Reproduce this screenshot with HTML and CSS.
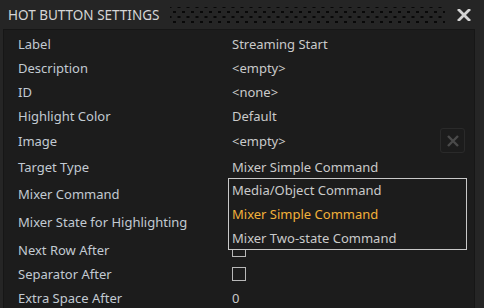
FILE: index.html
```html
<!DOCTYPE html>
<html>
<head>
<meta charset="utf-8">
<link rel="stylesheet" href="styles.css">
</head>
<body>
<div class="window">
  <div class="titlebar">
    <span class="title">HOT BUTTON SETTINGS</span>
    <span class="dots"></span>
    <span class="close"><svg width="14" height="12" viewBox="0 0 14 12"><path d="M2 1 L12 11 M12 1 L2 11" stroke="#d4d4d4" stroke-width="2.8" stroke-linecap="square"/></svg></span>
  </div>
  <div class="panel">
    <div class="rows">
      <div class="row h24"><span class="lbl">Label</span><span class="val">Streaming Start</span></div>
      <div class="row h24"><span class="lbl">Description</span><span class="val">&lt;empty&gt;</span></div>
      <div class="row h24"><span class="lbl">ID</span><span class="val">&lt;none&gt;</span></div>
      <div class="row h245"><span class="lbl">Highlight Color</span><span class="val">Default</span></div>
      <div class="row h25"><span class="lbl">Image</span><span class="val">&lt;empty&gt;</span><span class="clear"><svg width="14" height="14" viewBox="0 0 14 14"><path d="M2 2 L12 12 M12 2 L2 12" stroke="#4a4a4a" stroke-width="2.4"/></svg></span></div>
      <div class="row h265"><span class="lbl">Target Type</span><span class="val">Mixer Simple Command</span></div>
      <div class="row h28"><span class="lbl">Mixer Command</span><span class="val"></span></div>
      <div class="row h285"><span class="lbl">Mixer State for Highlighting</span><span class="val"></span></div>
      <div class="row h26"><span class="lbl">Next Row After</span><span class="val"><span class="check"></span></span></div>
      <div class="row h235"><span class="lbl">Separator After</span><span class="val"><span class="check"></span></span></div>
      <div class="row h24"><span class="lbl">Extra Space After</span><span class="val">0</span></div>
    </div>
    <div class="dropdown">
      <div class="item">Media/Object Command</div>
      <div class="item selected">Mixer Simple Command</div>
      <div class="item">Mixer Two-state Command</div>
    </div>
  </div>
</div>
</body>
</html>
```
FILE: styles.css
```css
html, body {
  margin: 0;
  padding: 0;
  background: #222222;
  overflow: hidden;
}
.window {
  width: 484px;
  height: 308px;
  background: #252525;
  font-family: "Noto Sans", "Open Sans", sans-serif;
  font-size: 13px;
  overflow: hidden;
  display: flex;
  flex-direction: column;
}
.titlebar {
  height: 29px;
  flex: none;
  display: flex;
  align-items: center;
  padding-left: 8px;
  padding-right: 13px;
  border-top-left-radius: 4px;
  box-sizing: border-box;
}
.title {
  color: #d6d6d6;
  font-size: 13.5px;
}
.dots {
  flex: 1;
  height: 16px;
  margin-left: 11px;
  margin-right: 12px;
  background-image:
    radial-gradient(circle, #080808 1.2px, transparent 1.5px),
    radial-gradient(circle, #080808 1.2px, transparent 1.5px);
  background-size: 9px 10px, 9px 10px;
  background-position: 0 0, 4.5px 5px;
}
.close {
  display: flex;
  align-items: center;
}
.panel {
  position: relative;
  flex: 1;
  margin-left: 3px;
  margin-right: 9px;
  background: #1c1c1c;
  border: 1px solid #161616;
  border-bottom: none;
  padding: 2px 0 0 14px;
}
.rows {
  display: flex;
  flex-direction: column;
}
.row {
  display: flex;
  align-items: center;
  flex: none;
}
.h24 { height: 24px; }
.h245 { height: 24.5px; }
.h25 { height: 25px; }
.h265 { height: 26.5px; }
.h28 { height: 28px; }
.h285 { height: 28.5px; }
.h26 { height: 26px; }
.h235 { height: 23.5px; }
.lbl {
  width: 214px;
  color: #c2cad2;
}
.val {
  color: #cacaca;
  flex: 1;
}
.clear {
  width: 25px;
  height: 25px;
  border: 1px solid #2a2a2a;
  border-radius: 3px;
  box-sizing: border-box;
  display: flex;
  align-items: center;
  justify-content: center;
  margin-right: 9px;
  margin-top: -1px;
}
.check {
  display: block;
  width: 14px;
  height: 14px;
  border: 1px solid #b8b8b8;
  box-sizing: border-box;
}
.dropdown {
  position: absolute;
  left: 224px;
  top: 148px;
  width: 239px;
  height: 72px;
  box-sizing: border-box;
  border: 1px solid #c8c8c8;
  background: #1c1c1c;
}
.item {
  height: 24px;
  line-height: 23px;
  padding-left: 3px;
  color: #cacaca;
}
.item.selected {
  color: #f2b13a;
}
```
